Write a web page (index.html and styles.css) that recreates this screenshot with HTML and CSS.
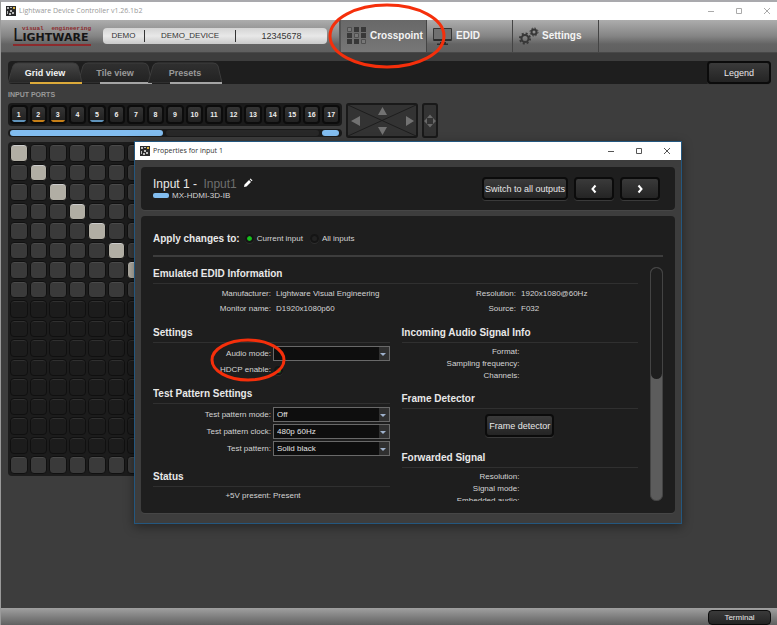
FILE: index.html
```html
<!DOCTYPE html>
<html lang="en">
<head>
<meta charset="utf-8">
<title>Lightware Device Controller</title>
<link rel="stylesheet" href="styles.css">
</head>
<body>
<svg class="defs" width="0" height="0" aria-hidden="true">
  <symbol id="app" viewBox="0 0 10 10"><rect width="10" height="10" fill="#2b2b2b"/><path d="M1 1h2v2H1zM4 1h2v1H4zM1 5h1v3H1zM4 4h2v2H4zM6 6h2v2H6zM3 7h2v2H3z" fill="#bbb"/><path d="M7 1h2v2H7z" fill="#d9b23c"/></symbol>
  <symbol id="min" viewBox="0 0 8 8"><path d="M1 4.500h6" stroke="currentColor" fill="none"/></symbol>
  <symbol id="max" viewBox="0 0 8 8"><path d="M1.500 1.500h5v5h-5z" stroke="currentColor" fill="none"/></symbol>
  <symbol id="close" viewBox="0 0 8 8"><path d="M1 1l6 6M7 1L1 7" stroke="currentColor" fill="none"/></symbol>
  <symbol id="tabshape" viewBox="0 0 74 21"><path d="M0 21L5 4Q6 1 10 1H65Q69 1 70 4L74 21z"/></symbol>
  <linearGradient id="tabfill" x1="0" y1="0" x2="0" y2="1"><stop offset="0" stop-color="#303030"/><stop offset="1" stop-color="#222"/></linearGradient>
  <linearGradient id="tabfill-on" x1="0" y1="0" x2="0" y2="1"><stop offset="0" stop-color="#464646"/><stop offset="1" stop-color="#262626"/></linearGradient>
</svg>
<div class="app">
  <div class="titlebar main-title">
    <svg class="i10"><use href="#app"/></svg><span>Lightware Device Controller v1.26.1b2</span>
    <div class="winbtns">
      <button aria-label="Minimize"><svg><use href="#min"/></svg></button>
      <button aria-label="Maximize"><svg><use href="#max"/></svg></button>
      <button aria-label="Close"><svg><use href="#close"/></svg></button>
    </div>
  </div>
  <header class="header">
    <div class="logo">
      <div class="logo-tag"><span>visual</span><span>engineering</span></div>
      <div class="logo-name"><span class="logo-l">L</span>IGHTWARE</div>
    </div>
    <div class="device"><span>DEMO</span><span>DEMO_DEVICE</span><span class="serial">12345678</span></div>
    <nav class="nav">
      <a href="#" class="active">
        <svg width="22" height="18" viewBox="0 0 22 18"><g fill="#383838"><path d="M8 0h5v5H8zM15 0h5v5h-5zM1 6h5v5H1zM15 6h5v5h-5zM1 12h5v5H1zM8 12h5v5H8z"/></g><path d="M1.500 .5h4v4h-4zM8.500 6.500h4v4h-4zM15.500 12.500h4v4h-4z" fill="#777" stroke="#505050"/></svg>
        Crosspoint
        <svg class="mark" width="117" height="66" viewBox="0 0 117 66"><ellipse cx="58" cy="33" rx="57" ry="31"/></svg>
      </a>
      <a href="#"><svg width="22" height="18" viewBox="0 0 22 18"><path d="M1.500 1.500h18v12h-18z" fill="#707070" stroke="#353535"/><path d="M2 13h17M8 16h6M5 17.500h11" stroke="#2c2c2c" stroke-width="2"/></svg>EDID</a>
      <a href="#"><svg width="22" height="18" viewBox="0 0 22 18" fill="none" stroke="#383838"><circle cx="7" cy="11.500" r="3.500" stroke-width="2"/><circle cx="7" cy="11.500" r="5" stroke-width="2" stroke-dasharray="2 1.930"/><circle cx="16" cy="5" r="2.500" stroke-width="2"/><circle cx="16" cy="5" r="4" stroke-dasharray="1.600 1.540"/></svg>Settings</a>
    </nav>
  </header>
  <main class="content">
    <div class="tabs">
      <button class="tab selected"><svg><use href="#tabshape"/></svg><span>Grid view</span></button>
      <button class="tab"><svg><use href="#tabshape"/></svg><span>Tile view</span></button>
      <button class="tab"><svg><use href="#tabshape"/></svg><span>Presets</span></button>
      <button class="btn legend">Legend</button>
    </div>
    <h2 class="ports-label">INPUT PORTS</h2>
    <div class="portrow">
      <div class="portcol">
        <div class="ports">
          <button class="blue">1</button><button class="orange">2</button><button class="orange">3</button><button>4</button><button class="blue">5</button><button>6</button><button>7</button><button>8</button><button>9</button><button>10</button><button>11</button><button>12</button><button>13</button><button>14</button><button>15</button><button>16</button><button>17</button>
        </div>
        <div class="hscroll"><i class="range"></i><i class="rest"></i><i class="tail"></i></div>
      </div>
      <button class="pad" aria-label="Move grid"><svg width="72" height="35" viewBox="0 0 72 35"><path d="M2 2l68 31M70 2L2 33" stroke="#1d1d1d"/><path d="M32 12l4.500-8 4.500 8zM32 24l4.500 8 4.500-8zM14 13v10l-9-5zM60 13v10l8-5z" fill="#727272"/></svg></button>
      <button class="pad" aria-label="Expand"><svg width="16" height="35" viewBox="0 0 16 35"><path d="M5 15L8 11.500l3 3.500zM5 21L8 24.500l3-3.500zM5 15L2 18l3 3zM11 15l3 3-3 3z" fill="#686868"/></svg></button>
    </div>
    <div class="matrix" id="matrix"></div>
  </main>
  <footer class="footer"><button class="btn">Terminal</button></footer>
</div>

<div class="dialog" role="dialog" aria-labelledby="dlg-title">
  <div class="titlebar">
    <svg class="i10"><use href="#app"/></svg><span id="dlg-title">Properties for input 1</span>
    <div class="winbtns">
      <button aria-label="Minimize"><svg><use href="#min"/></svg></button>
      <button aria-label="Maximize"><svg><use href="#max"/></svg></button>
      <button aria-label="Close"><svg><use href="#close"/></svg></button>
    </div>
  </div>
  <div class="dialog-body">
    <div class="panel head">
      <div class="name">
        <h1>Input 1 - <span>Input1</span> <svg width="10" height="10" viewBox="0 0 10 10"><path d="M1 9l.5-2.500L6 2l2 2-4.500 4.500zM6.700 1.300L7.500.5l2 2-.8.8z" fill="#fff"/></svg></h1>
        <p><i></i>MX-HDMI-3D-IB</p>
      </div>
      <button class="btn wide">Switch to all outputs</button>
      <button class="btn step" aria-label="Previous input"><svg width="10" height="10" viewBox="0 0 10 10"><path d="M6.500 1.500L3.500 5l3 3.500"/></svg></button>
      <button class="btn step" aria-label="Next input"><svg width="10" height="10" viewBox="0 0 10 10"><path d="M3.500 1.500l3 3.500-3 3.500"/></svg></button>
    </div>
    <div class="panel props">
      <div class="apply">
        <h2>Apply changes to:</h2>
        <label><input type="radio" name="scope" checked>Current input</label>
        <label><input type="radio" name="scope">All inputs</label>
      </div>
      <div class="scroller">
        <div class="sections">
          <section class="full">
            <h3>Emulated EDID Information</h3>
            <dl class="facts">
              <dt>Manufacturer:</dt><dd>Lightware Visual Engineering</dd><dt>Resolution:</dt><dd>1920x1080@60Hz</dd>
              <dt>Monitor name:</dt><dd>D1920x1080p60</dd><dt>Source:</dt><dd>F032</dd>
            </dl>
          </section>
          <div class="column">
            <section>
              <h3>Settings</h3>
              <div class="form">
                <label for="audio">Audio mode:</label><div class="sel"><select id="audio"><option></option></select></div>
                <label for="hdcp">HDCP enable:</label><input type="checkbox" id="hdcp" checked>
                <svg class="mark" width="74" height="42" viewBox="0 0 74 42"><ellipse cx="37" cy="21" rx="36" ry="20"/></svg>
              </div>
            </section>
            <section class="roomy">
              <h3>Test Pattern Settings</h3>
              <div class="form">
                <label for="mode">Test pattern mode:</label><div class="sel"><select id="mode"><option>Off</option></select></div>
                <label for="clock">Test pattern clock:</label><div class="sel"><select id="clock"><option>480p 60Hz</option></select></div>
                <label for="pattern">Test pattern:</label><div class="sel"><select id="pattern"><option>Solid black</option></select></div>
              </div>
            </section>
            <section>
              <h3>Status</h3>
              <dl class="pairs"><dt>+5V present:</dt><dd>Present</dd></dl>
            </section>
          </div>
          <div class="column">
            <section>
              <h3>Incoming Audio Signal Info</h3>
              <dl class="pairs"><dt>Format:</dt><dd></dd><dt>Sampling frequency:</dt><dd></dd><dt>Channels:</dt><dd></dd></dl>
            </section>
            <section class="roomy">
              <h3>Frame Detector</h3>
              <div class="center"><button class="btn">Frame detector</button></div>
            </section>
            <section>
              <h3>Forwarded Signal</h3>
              <dl class="pairs"><dt>Resolution:</dt><dd></dd><dt>Signal mode:</dt><dd></dd><dt>Embedded audio:</dt><dd></dd></dl>
            </section>
          </div>
        </div>
        <div class="vscroll"><i></i></div>
      </div>
    </div>
  </div>
</div>
<script src="matrix.js"></script>
</body>
</html>
```
FILE: matrix.js
```js
// Builds the crosspoint grid: one button for each output/input pair.
const size = 17;
const matrix = document.getElementById("matrix");
for (let row = 1; row <= size; row++) {
  for (let col = 1; col <= size; col++) {
    const cell = document.createElement("button");
    if (row > 8 && row < size) cell.className = "empty";
    else if (row === col && row < 9) cell.className = "on";
    cell.setAttribute("aria-label", "Output " + row + ", input " + col);
    matrix.append(cell);
  }
}
```
FILE: styles.css
```css
* { box-sizing: border-box; }
body, h1, h2, h3, p, dl, dd { margin: 0; }
body {
  font: 8px/12px "Liberation Sans", Arial, sans-serif;
  color: #e8e8e8;
  background: #3d3d3d;
  position: relative;
}
button, select, input { font: inherit; color: inherit; margin: 0; padding: 0; }
button { border: 0; background: none; }
.defs { position: absolute; }
.app {
  min-height: 100vh;
  display: flex;
  flex-direction: column;
  border-top: 2px solid #a9a9ad;
  border-left: 1px solid #9a9a9a;
}

.titlebar {
  display: flex;
  align-items: center;
  gap: 3px;
  height: 18px;
  padding: 0 6px 0 5px;
  background: #fff;
  color: #333;
  font: 7px/12px "Open Sans", sans-serif;
}
.main-title { color: #999; }
.i10 { width: 10px; height: 10px; }
.winbtns { margin-left: auto; display: flex; gap: 20px; color: #555; }
.winbtns button { width: 8px; height: 8px; display: flex; }
.winbtns svg { width: 8px; height: 8px; }
.main-title .winbtns { color: #aaa; }

.header {
  display: flex;
  align-items: center;
  height: 33px;
  padding-left: 12px;
  background: linear-gradient(#adadad, #858585 50%, #646464 75%, #606060);
  border-bottom: 1px solid #484848;
}
.logo { width: 78px; border-bottom: 2px solid #8c2a2c; margin-right: 12px; }
.logo-tag {
  display: flex;
  justify-content: space-between;
  padding-left: 9px;
  height: 3px;
  color: #8c2a2c;
  font: bold 6px/3px "Liberation Mono", monospace;
}
.logo-name { color: #151515; font: bold 11px/13px "DejaVu Sans", sans-serif; height: 14px; white-space: nowrap; }
.logo-l { font-size: 17px; line-height: 10px; font-weight: normal; }
.device {
  display: grid;
  grid-template-columns: 41px 91px 92px;
  height: 16px;
  line-height: 16px;
  border-radius: 4px;
  background: linear-gradient(#d4d4d4, #e8e8e8 50%, #cacaca);
  color: #333;
  text-align: center;
  margin-right: 12px;
}
.device span + span { border-left: 1px solid #333; height: 12px; margin-top: 2px; line-height: 12px; }
.device .serial { font-size: 9px; }
.nav { display: flex; align-self: stretch; }
.nav a {
  position: relative;
  width: 86px;
  display: flex;
  align-items: center;
  gap: 2px;
  padding-left: 5px;
  border-right: 1px solid #444;
  color: #f4f4f4;
  font-size: 10px;
  font-weight: bold;
  text-decoration: none;
}
.nav .active { width: 88px; background: linear-gradient(#686868, #777); border-left: 2px solid #555; z-index: 1; }
.mark { position: absolute; z-index: 2; fill: none; stroke: #f52f0b; stroke-width: 3; pointer-events: none; overflow: visible; }
.nav .mark { left: -12px; top: -17px; }

.content { flex: 1; padding: 8px 6px 0 7px; }
.btn {
  height: 23px;
  padding: 0 4px;
  border: 2px solid #0b0b0b;
  border-radius: 4px;
  background: linear-gradient(#3a3a3a, #242424);
  box-shadow: 0 1px #3a3a3a;
  font-size: 9px;
  white-space: nowrap;
}
.tabs { display: flex; height: 23px; background: #1e1e1e; border-radius: 4px; }
.tab {
  position: relative;
  width: 74px;
  margin-right: -4px;
  font-size: 9px;
  font-weight: bold;
  color: #999;
}
.tab svg { position: absolute; left: 0; top: 1px; width: 74px; height: 21px; fill: url(#tabfill); stroke: #3c3c3c; }
.tab span { position: relative; }
.tab::after { content: ""; position: absolute; left: 22px; right: 0; bottom: 0; height: 2px; background: #a5a5a5; }
.tab.selected { color: #f2f2f2; z-index: 1; }
.tab.selected svg { fill: url(#tabfill-on); }
.tab.selected::after { background: #dcaa3a; }
.legend { margin-left: auto; width: 64px; }
.ports-label { font-size: 7px; line-height: 10px; color: #999; padding: 6px 0 3px; font-weight: bold; }
.portrow { display: flex; gap: 4px; }
.portcol { width: 334px; }
.ports {
  display: grid;
  grid-template-columns: repeat(17, 1fr);
  gap: 2px;
  padding: 2px;
  height: 23px;
  background: #1a1a1a;
  border-radius: 4px;
}
.ports button {
  border: 2px solid #0c0c0c;
  border-radius: 4px;
  background: linear-gradient(#353535, #222);
  font-size: 7px;
  line-height: 11px;
  font-weight: bold;
  color: #eee;
}
.ports .blue { background: linear-gradient(to top, #5f93bb 2px, #222 2px, #353535); background-clip: padding-box; background-color: #0c0c0c; }
.ports .orange { background: linear-gradient(to top, #c67f17 2px, #222 2px, #353535); background-clip: padding-box; background-color: #0c0c0c; }
.hscroll {
  display: flex;
  gap: 3px;
  height: 8px;
  margin-top: 3px;
  padding: 1px 3px 1px 2px;
  background: #1a1a1a;
  border-radius: 4px;
}
.hscroll i { border-radius: 3px; background: #82bdf0; }
.hscroll .range { width: 153px; }
.hscroll .rest { flex: 1; background: #282828; }
.hscroll .tail { width: 17px; }
.pad { height: 35px; background: #333; border-radius: 3px; box-shadow: inset 0 0 0 2px #191919; }
.pad svg { display: block; }

.matrix {
  width: 334px;
  margin-top: 4px;
  padding: 2px;
  display: grid;
  grid-template-columns: repeat(17, 1fr);
  grid-template-rows: repeat(17, 1fr);
  height: 334px;
  gap: 2px;
  background: #1c1c1c;
  border-radius: 4px;
}
.matrix button {
  border: 1px solid #101010;
  border-radius: 4px;
  background: #3a3a3a;
  box-shadow: inset 0 1px #4a4a4a;
}
.matrix .empty { background: #1c1c1c; box-shadow: inset 0 1px #303030; }
.matrix .on { background: #b1aea4; box-shadow: inset 0 1px #ccc; }
.footer {
  display: flex;
  justify-content: flex-end;
  align-items: flex-end;
  height: 17px;
  padding-right: 6px;
  background: linear-gradient(#a0a0a0, #606060);
}
.footer .btn { width: 63px; height: 15px; font-size: 8px; border-width: 1px; box-shadow: none; }

.dialog {
  position: absolute;
  left: 134px;
  top: 141px;
  width: 548px;
  border: 1px solid #24577f;
  background: #3d3d3d;
  box-shadow: 0 3px 10px #0006;
}
.dialog-body { padding: 7px 6px 10px; display: grid; gap: 6px; }
.dialog .winbtns { padding-right: 4px; }
.panel { background: #1e1e1e; border-radius: 4px; padding: 0 12px; box-shadow: 0 1px #464646; }
.panel.props { padding-bottom: 12px; }
.head { display: flex; align-items: center; gap: 6px; height: 43px; padding-right: 15px; }
.name { flex: 1; }
.name h1 { font-size: 12px; line-height: 14px; font-weight: normal; }
.name h1 span { color: #6e6e6e; margin: 0 3px; }
.name p { display: flex; align-items: center; gap: 3px; line-height: 10px; color: #d4d4d4; }
.name i { width: 16px; height: 5px; border-radius: 2px; background: #82bdf0; }
.wide { width: 86px; padding: 0; }
.step { width: 40px; display: flex; align-items: center; justify-content: center; }
.step svg { fill: none; stroke: #fff; stroke-width: 2; }
.apply { display: flex; align-items: center; height: 41px; padding-top: 6px; border-bottom: 2px solid #3d3d3d; }
.apply h2 { font-size: 10px; margin-right: 5px; }
.apply label { display: flex; align-items: center; gap: 3px; margin-right: 7px; color: #d4d4d4; }
.apply input, #hdcp {
  appearance: none;
  width: 9px;
  height: 9px;
  border-radius: 50%;
  border: 2px solid #151515;
  background: #222;
  box-shadow: 0 1px #2d2d2d;
}
.apply input:checked { background: #16c01c; background-clip: padding-box; }
.scroller { display: flex; gap: 12px; padding-top: 10px; }
.sections {
  flex: 1;
  height: 234px;
  overflow: hidden;
  display: grid;
  grid-template-columns: 1fr 1fr;
  align-content: start;
  column-gap: 12px;
}
.full { grid-column: 1 / -1; }
section { padding-bottom: 10px; }
.roomy { padding-bottom: 14px; }
h3 { font-size: 10px; line-height: 14px; padding-bottom: 2px; border-bottom: 1px solid #303030; }
.facts { display: grid; grid-template-columns: 118px 1fr 118px 1fr; column-gap: 5px; line-height: 15px; padding-top: 2px; color: #d4d4d4; }
dt { text-align: right; }
.pairs { display: grid; grid-template-columns: 118px 1fr; column-gap: 2px; padding-top: 3px; color: #d4d4d4; }
.form {
  position: relative;
  display: grid;
  grid-template-columns: 118px 1fr;
  align-items: center;
  gap: 2px;
  padding-top: 3px;
  color: #d4d4d4;
}
.form label { text-align: right; line-height: 14px; }
.sel { position: relative; display: flex; }
.sel::after {
  content: "";
  position: absolute;
  right: 4px;
  top: 7px;
  border: 3px solid transparent;
  border-top-color: #9fb2cc;
  border-bottom: 0;
}
.sel select {
  appearance: none;
  width: 100%;
  height: 15px;
  padding: 0 3px;
  border: 1px solid #696969;
  border-radius: 0;
  background: linear-gradient(to left, #303030 10px, #0e0e0e 10px);
  color: #e4e4e4;
}
#hdcp { margin-left: 1px; }
#hdcp:checked { background: linear-gradient(135deg, #1e2e1e 50%, #1d7e25 50%); }
.form .mark { left: 58px; top: -4px; }
.center { display: flex; justify-content: center; padding-top: 5px; }
.center .btn { padding: 0 2px; }
.vscroll { width: 13px; height: 234px; border: 1px solid #444; border-radius: 6px; background: #5c5c5c; }
.vscroll i { display: block; height: 48%; border-radius: 6px; background: #1e1e1e; }
```
